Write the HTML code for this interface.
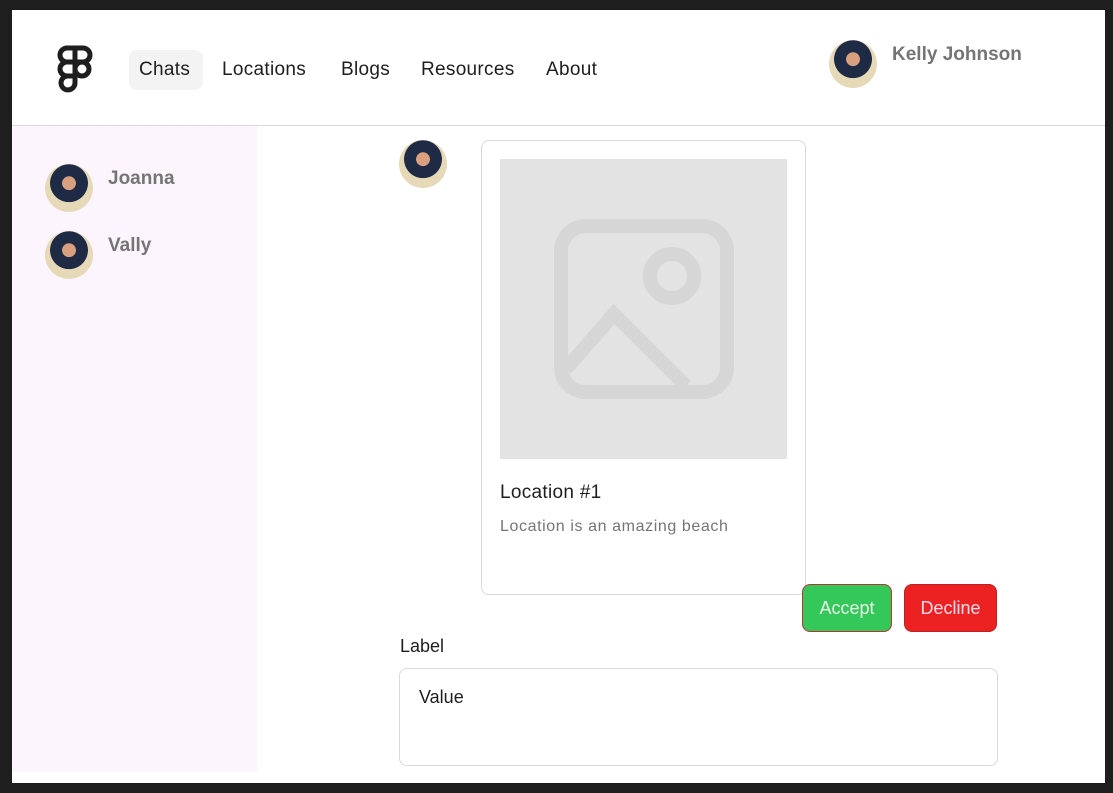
<!DOCTYPE html>
<html><head><style>
*{margin:0;padding:0;box-sizing:border-box}
body{width:1113px;height:793px;background:#1e1e1e;position:relative;overflow:hidden;font-family:"Liberation Sans",sans-serif}
.page{position:absolute;left:12px;top:10px;width:1093px;height:773px;background:#fff}
.hdr{position:absolute;left:0;top:0;width:1093px;height:116px;border-bottom:1px solid #d9d9d9}
.nav{position:absolute;top:40px;font-size:19px;color:#1e1e1e;padding:9px 10px;border-radius:8px;letter-spacing:0.3px}
.side{position:absolute;left:0;top:116px;width:245px;height:646px;background:#fdf5fd}
.av{position:absolute;width:48px;height:48px;border-radius:50%;background:radial-gradient(circle at 50% 40%,#d9a080 0 18%,#1f2a44 19% 50%,#e6d9b8 51%);overflow:hidden}
.name{position:absolute;font-weight:bold;font-size:19px;color:#757575}
.abs{position:absolute}
</style></head><body>
<div class="page">
 <div class="hdr">
  <svg class="abs" style="left:45px;top:35px" width="36" height="48" viewBox="0 0 36 48" fill="none" stroke="#1e1e1e" stroke-width="5">
   <path d="M18 3H10a7 7 0 0 0 0 14h8zM18 3h8a7 7 0 0 1 0 14h-8zM18 17h-8a7 7 0 0 0 0 14h8zM18 31h-8a7 7 0 1 0 8 7z"/><circle cx="25" cy="24" r="7"/>
  </svg>
  <div class="nav" style="left:117px;width:74px;background:#f3f3f3">Chats</div>
  <div class="nav" style="left:200px">Locations</div>
  <div class="nav" style="left:319px">Blogs</div>
  <div class="nav" style="left:399px">Resources</div>
  <div class="nav" style="left:524px">About</div>
  <div class="av" style="left:817px;top:30px"></div>
  <div class="name" style="left:880px;top:34px">Kelly Johnson</div>
 </div>
 <div class="side">
  <div class="av" style="left:33px;top:38px"></div>
  <div class="name" style="left:96px;top:42px">Joanna</div>
  <div class="av" style="left:33px;top:105px"></div>
  <div class="name" style="left:96px;top:109px">Vally</div>
 </div>
 <div class="av" style="left:387px;top:130px"></div>
 <div class="abs" style="left:469px;top:130px;width:325px;height:455px;border:1px solid #d9d9d9;border-radius:8px">
  <div class="abs" style="left:18px;top:18px;width:287px;height:300px;background:#e3e3e3">
   <svg class="abs" style="left:54px;top:60px" width="180" height="180" viewBox="0 0 180 180" fill="none" stroke="#d6d6d6" stroke-width="14">
    <rect x="7" y="7" width="166" height="166" rx="25"/><circle cx="118" cy="57" r="22"/><path d="M12 150l48-55 72 72"/>
   </svg>
  </div>
  <div class="abs" style="left:18px;top:341px;font-size:19px;color:#1e1e1e;letter-spacing:0.3px">Location #1</div>
  <div class="abs" style="left:18px;top:377px;font-size:16px;color:#757575;letter-spacing:0.6px">Location is an amazing beach</div>
 </div>
 <div class="abs" style="left:790px;top:574px;width:90px;height:48px;background:#34c759;border:1px solid #b33;border-radius:8px;color:#e6f5e6;font-size:18px;text-align:center;line-height:46px">Accept</div>
 <div class="abs" style="left:892px;top:574px;width:93px;height:48px;background:#ec2222;border:1px solid #b22;border-radius:8px;color:#fde;font-size:18px;text-align:center;line-height:46px">Decline</div>
 <div class="abs" style="left:388px;top:626px;font-size:18px;color:#1e1e1e">Label</div>
 <div class="abs" style="left:387px;top:658px;width:599px;height:98px;border:1px solid #d9d9d9;border-radius:8px">
  <div class="abs" style="left:19px;top:18px;font-size:18px;color:#1e1e1e">Value</div>
 </div>
</div>
</body></html>
